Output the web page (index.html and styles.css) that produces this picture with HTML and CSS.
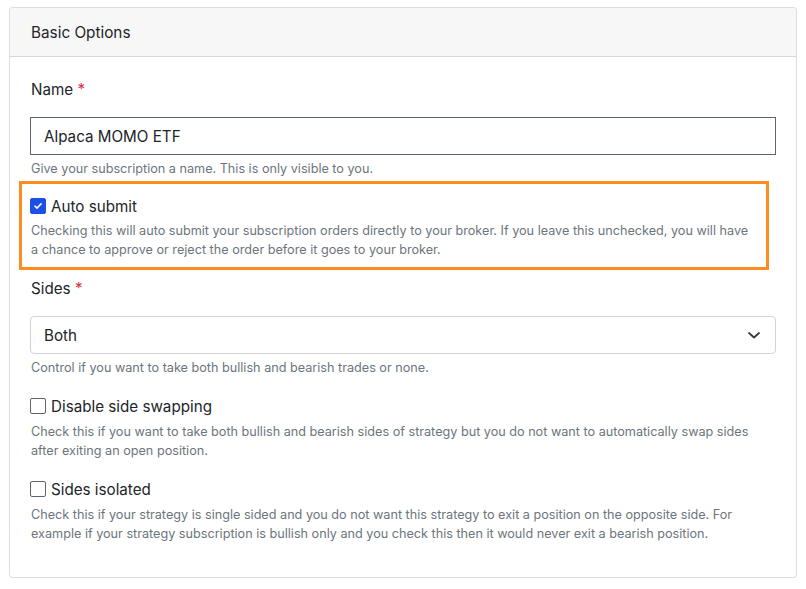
FILE: index.html
```html
<!DOCTYPE html>
<html lang="en">
<head>
<meta charset="utf-8">
<title>Basic Options</title>
<link rel="stylesheet" href="styles.css">
</head>
<body>
<div class="card">
  <div class="card-header">Basic Options</div>
  <div class="card-body">
    <div class="field">
      <label class="label">Name <span class="req">*</span></label>
      <div class="input">Alpaca MOMO ETF</div>
      <div class="help">Give your subscription a name. This is only visible to you.</div>
    </div>

    <div class="highlight">
      <div class="check-row">
        <span class="check checked">
          <svg width="16" height="16" viewBox="0 0 16 16"><path d="M4.5 8.2l2.3 2.2 4.7-4.8" fill="none" stroke="#fff" stroke-width="1.8" stroke-linecap="round" stroke-linejoin="round"/></svg>
        </span>
        <span class="check-label">Auto submit</span>
      </div>
      <div class="help desc">Checking this will auto submit your subscription orders directly to your broker. If you leave this unchecked, you will have a chance to approve or reject the order before it goes to your broker.</div>
    </div>

    <div class="field sides">
      <label class="label">Sides <span class="req">*</span></label>
      <div class="select">
        <span>Both</span>
        <svg class="chevron" width="16" height="16" viewBox="0 0 16 16"><path d="M3 6l5 4.5L13 6" fill="none" stroke="#343a40" stroke-width="1.8" stroke-linecap="round" stroke-linejoin="round"/></svg>
      </div>
      <div class="help">Control if you want to take both bullish and bearish trades or none.</div>
    </div>

    <div class="option">
      <div class="check-row">
        <span class="check"></span>
        <span class="check-label">Disable side swapping</span>
      </div>
      <div class="help desc">Check this if you want to take both bullish and bearish sides of strategy but you do not want to automatically swap sides after exiting an open position.</div>
    </div>

    <div class="option">
      <div class="check-row">
        <span class="check"></span>
        <span class="check-label">Sides isolated</span>
      </div>
      <div class="help desc">Check this if your strategy is single sided and you do not want this strategy to exit a position on the opposite side. For example if your strategy subscription is bullish only and you check this then it would never exit a bearish position.</div>
    </div>
  </div>
</div>
</body>
</html>
```
FILE: styles.css
```css
* { box-sizing: border-box; }

body {
  margin: 0;
  padding: 7px 9px 0;
  background: #ffffff;
  font-family: Inter, "Noto Sans", "Liberation Sans", sans-serif;
  color: #212529;
}

.card {
  border: 1px solid rgba(0, 0, 0, 0.13);
  border-radius: 4px;
  background: #fff;
}

.card-header {
  height: 49px;
  padding: 0 21px;
  display: flex;
  align-items: center;
  font-size: 15.3px;
  background: #f7f7f7;
  border-bottom: 1px solid rgba(0, 0, 0, 0.13);
  border-radius: 4px 4px 0 0;
}

.card-body {
  padding: 21px 20px 34px;
}

.label {
  display: block;
  font-size: 15.2px;
  line-height: 24px;
  padding-left: 1px;
}

.req { color: #dc3545; }

.input {
  margin-top: 15px;
  height: 38px;
  border: 1px solid #5c6470;
  padding: 0 13px;
  display: flex;
  align-items: center;
  font-size: 15.2px;
}

.help {
  font-size: 12.65px;
  line-height: 19px;
  color: #6c757d;
  margin-top: 4px;
  padding-left: 1px;
}

.highlight {
  margin: 3px 7px 0 -11px;
  border: 3px solid #fd8d1e;
  padding: 10px 8px 8px 8px;
}

.check-row {
  display: flex;
  align-items: center;
  height: 24px;
}

.check {
  width: 16px;
  height: 16px;
  border: 1px solid #5f6670;
  border-radius: 2px;
  flex: none;
  display: flex;
  align-items: center;
  justify-content: center;
}

.check.checked {
  background: #1c4fe3;
  border-color: #1c4fe3;
}

.check.checked svg { display: block; }

.check-label {
  margin-left: 5px;
  font-size: 15.2px;
}

.desc { margin-top: 3px; }

.sides { margin-top: 7px; }

.select {
  margin-top: 15px;
  height: 38px;
  border: 1px solid #ced4da;
  border-radius: 4px;
  padding: 0 13px;
  display: flex;
  align-items: center;
  justify-content: space-between;
  font-size: 15.2px;
}

.option { margin-top: 17px; }
.option .desc { margin-top: 4px; }
```
